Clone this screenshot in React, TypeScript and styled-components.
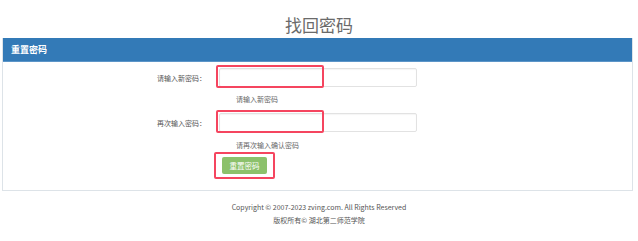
import styled, { createGlobalStyle } from "styled-components";

const Global = createGlobalStyle`
  html, body {
    margin: 0;
    padding: 0;
    background: #fff;
  }
  body {
    font-family: "Noto Sans CJK SC", "Liberation Sans", sans-serif;
    color: #555;
  }
`;

const Page = styled.div`
  width: 638px;
  display: flex;
  flex-direction: column;
`;

const Title = styled.h1`
  margin: 15px 0 3px;
  height: 20px;
  line-height: 20px;
  font-size: 17px;
  font-weight: 400;
  color: #6a6a6a;
  text-align: center;
`;

const Panel = styled.section`
  margin: 0 5px 0 2px;
  border: 1px solid #dde3e8;
  border-top: none;
`;

const Heading = styled.div`
  height: 23px;
  padding-left: 8px;
  display: flex;
  align-items: center;
  background: #337ab7;
  border-bottom: 1px solid #5c95c8;
  color: #fff;
  font-size: 9px;
  font-weight: 700;
`;

const Body = styled.div`
  padding: 5px 0 16px;
  display: grid;
  grid-template-columns: 203px 1fr;
  column-gap: 13px;
  align-items: center;
  line-height: 10px;
`;

const Label = styled.label`
  text-align: right;
  font-size: 7px;
  color: #555;
`;

const Field = styled.div`
  position: relative;
  width: 198px;
  height: 19px;
  margin: 1px 0;
`;

const Input = styled.input`
  display: block;
  box-sizing: border-box;
  width: 100%;
  height: 100%;
  margin: 0;
  border: 1px solid #e2e2e2;
  border-radius: 2px;
  box-shadow: inset 0 1px 1px rgba(0, 0, 0, 0.04);
  outline: none;
`;

const Mark = styled.span<{ $w: number; $h: number; $x: number; $y: number }>`
  position: absolute;
  left: ${(p) => p.$x}px;
  top: ${(p) => p.$y}px;
  width: ${(p) => p.$w}px;
  height: ${(p) => p.$h}px;
  border: 2px solid #f5455f;
  border-radius: 2px;
  box-sizing: border-box;
  pointer-events: none;
`;

const Help = styled.div<{ $gapTop: number; $gapBottom: number }>`
  grid-column: 2;
  padding-left: 17px;
  margin: ${(p) => p.$gapTop}px 0 ${(p) => p.$gapBottom}px;
  height: 9px;
  line-height: 9px;
  font-size: 7px;
  color: #666;
`;

const ButtonWrap = styled.div`
  grid-column: 2;
  position: relative;
  display: flex;
  width: 60px;
  height: 17px;
  padding-left: 3px;
`;

const Button = styled.button`
  display: block;
  width: 45px;
  height: 17px;
  margin: 0;
  border: none;
  border-radius: 2px;
  background: #8cc16b;
  color: #fff;
  font-family: inherit;
  font-size: 7.5px;
  line-height: 17px;
  padding: 0;
  cursor: pointer;
`;

const Footer = styled.footer`
  margin-top: 12px;
  display: flex;
  flex-direction: column;
  align-items: center;
  gap: 4px;
  font-size: 7px;
  line-height: 9px;
  color: #555;
`;

const App = () => {
  return (
    <Page>
      <Global />
      <Title>找回密码</Title>
      <Panel>
        <Heading>重置密码</Heading>
        <Body>
          <Label>请输入新密码：</Label>
          <Field>
            <Input type="password" />
            <Mark $x={-3} $y={-3} $w={108} $h={23} />
          </Field>
          <Help $gapTop={7} $gapBottom={8}>请输入新密码</Help>

          <Label>再次输入密码：</Label>
          <Field>
            <Input type="password" />
            <Mark $x={-3} $y={-3} $w={108} $h={23} />
          </Field>
          <Help $gapTop={8} $gapBottom={7}>请再次输入确认密码</Help>

          <ButtonWrap>
            <Button>重置密码</Button>
            <Mark $x={-5} $y={-5} $w={61} $h={27} />
          </ButtonWrap>
        </Body>
      </Panel>
      <Footer>
        <span>Copyright © 2007-2023 zving.com. All Rights Reserved</span>
        <span>版权所有© 湖北第二师范学院</span>
      </Footer>
    </Page>
  );
};

export default App;
